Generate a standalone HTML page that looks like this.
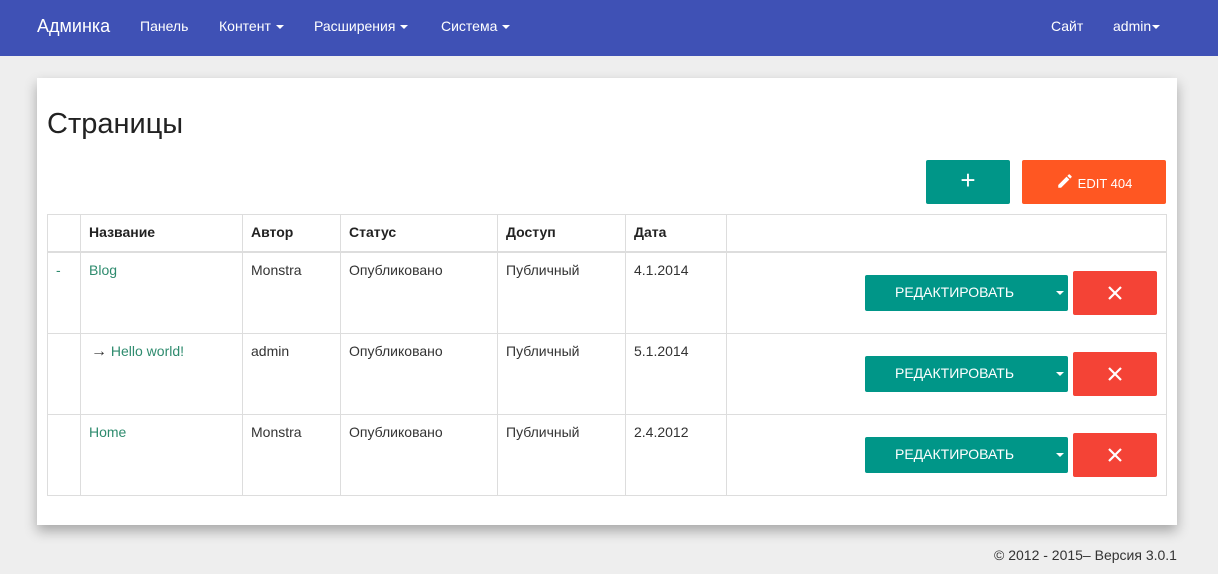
<!DOCTYPE html>
<html><head><meta charset="utf-8"><style>
*{box-sizing:border-box;margin:0;padding:0}
body{width:1218px;height:574px;background:#eeeeee;font-family:"Liberation Sans",sans-serif;position:relative;overflow:hidden;color:#333}
.nav{position:absolute;left:0;top:0;width:1218px;height:56px;background:#3f51b5;color:#fff}
.nav span{position:absolute;top:18px;font-size:14px}
.caret{display:inline-block;width:0;height:0;border-left:4px solid transparent;border-right:4px solid transparent;border-top:4px solid #fff;vertical-align:middle;margin-left:5px}
.card{position:absolute;left:37px;top:78px;width:1140px;height:447px;background:#fff;box-shadow:0 6px 12px rgba(0,0,0,.3)}
h1{position:absolute;left:47px;top:108px;font-size:29px;font-weight:normal;color:#222}
.btn{position:absolute;color:#fff;border-radius:2px;text-align:center;font-size:14px}
.tbl{position:absolute;left:47px;top:214px;width:1120px;height:282px;border:1px solid #ddd}
.v{position:absolute;top:0;height:100%;border-left:1px solid #ddd}
.h{position:absolute;left:0;width:100%;border-top:1px solid #ddd}
.t{position:absolute;font-size:14px}
.g{color:#2e8b6e}
.b{font-weight:bold;color:#222}
.x svg{position:absolute;left:35px;top:15px}
</style></head><body>
<div class="nav">
<span style="left:37px;top:16px;font-size:18px">Админка</span>
<span style="left:140px">Панель</span>
<span style="left:219px">Контент<i class="caret"></i></span>
<span style="left:314px">Расширения<i class="caret"></i></span>
<span style="left:441px">Система<i class="caret"></i></span>
<span style="left:1051px">Сайт</span>
<span style="left:1113px">admin<i class="caret" style="margin-left:1px"></i></span>
</div>
<div class="card"></div>
<h1>Страницы</h1>
<div class="btn" style="left:926px;top:160px;width:84px;height:44px;background:#009688;font-size:26px;line-height:40px">+</div>
<div class="btn" style="left:1022px;top:160px;width:144px;height:44px;background:#ff5722;line-height:48px;font-size:13px"><svg width="18" height="18" viewBox="0 0 24 24" style="vertical-align:-2px;margin-right:4px"><path fill="#fff" d="M3 17.25V21h3.75L17.8 9.94l-3.75-3.75L3 17.25zM20.7 7.04a1 1 0 000-1.41l-2.34-2.34a1 1 0 00-1.41 0l-1.83 1.83 3.75 3.75 1.83-1.83z"/></svg>EDIT 404</div>
<div class="tbl">
<div class="v" style="left:32px"></div><div class="v" style="left:194px"></div><div class="v" style="left:292px"></div><div class="v" style="left:449px"></div><div class="v" style="left:577px"></div><div class="v" style="left:678px"></div>
<div class="h" style="top:36px;border-top-width:2px"></div><div class="h" style="top:118px"></div><div class="h" style="top:199px"></div>
</div>
<div class="t b" style="left:89px;top:224px">Название</div>
<div class="t b" style="left:251px;top:224px">Автор</div>
<div class="t b" style="left:349px;top:224px">Статус</div>
<div class="t b" style="left:506px;top:224px">Доступ</div>
<div class="t b" style="left:634px;top:224px">Дата</div>

<div class="t" style="left:56px;top:262px;color:#2e8b6e">-</div>
<div class="t g" style="left:89px;top:262px">Blog</div>
<div class="t" style="left:251px;top:262px">Monstra</div>
<div class="t" style="left:349px;top:262px">Опубликовано</div>
<div class="t" style="left:506px;top:262px">Публичный</div>
<div class="t" style="left:634px;top:262px">4.1.2014</div>

<div class="t" style="left:91px;top:343px"><span style="font-size:16px">→</span> <span class="g">Hello world!</span></div>
<div class="t" style="left:251px;top:343px">admin</div>
<div class="t" style="left:349px;top:343px">Опубликовано</div>
<div class="t" style="left:506px;top:343px">Публичный</div>
<div class="t" style="left:634px;top:343px">5.1.2014</div>

<div class="t g" style="left:89px;top:424px">Home</div>
<div class="t" style="left:251px;top:424px">Monstra</div>
<div class="t" style="left:349px;top:424px">Опубликовано</div>
<div class="t" style="left:506px;top:424px">Публичный</div>
<div class="t" style="left:634px;top:424px">2.4.2012</div>

<div class="btn" style="left:865px;top:275px;width:203px;height:36px;background:#009688;line-height:35px;text-align:left;padding-left:30px">РЕДАКТИРОВАТЬ<i class="caret" style="position:absolute;left:186px;top:16px"></i></div>
<div class="btn x" style="left:1073px;top:271px;width:84px;height:44px;background:#f44336"><svg width="14" height="14"><path d="M1 1L13 13M13 1L1 13" stroke="#fff" stroke-width="2.2"/></svg></div>
<div class="btn" style="left:865px;top:356px;width:203px;height:36px;background:#009688;line-height:35px;text-align:left;padding-left:30px">РЕДАКТИРОВАТЬ<i class="caret" style="position:absolute;left:186px;top:16px"></i></div>
<div class="btn x" style="left:1073px;top:352px;width:84px;height:44px;background:#f44336"><svg width="14" height="14"><path d="M1 1L13 13M13 1L1 13" stroke="#fff" stroke-width="2.2"/></svg></div>
<div class="btn" style="left:865px;top:437px;width:203px;height:36px;background:#009688;line-height:35px;text-align:left;padding-left:30px">РЕДАКТИРОВАТЬ<i class="caret" style="position:absolute;left:186px;top:16px"></i></div>
<div class="btn x" style="left:1073px;top:433px;width:84px;height:44px;background:#f44336"><svg width="14" height="14"><path d="M1 1L13 13M13 1L1 13" stroke="#fff" stroke-width="2.2"/></svg></div>

<div class="t" style="left:994px;top:547px">© 2012 - 2015– Версия 3.0.1</div>
</body></html>
